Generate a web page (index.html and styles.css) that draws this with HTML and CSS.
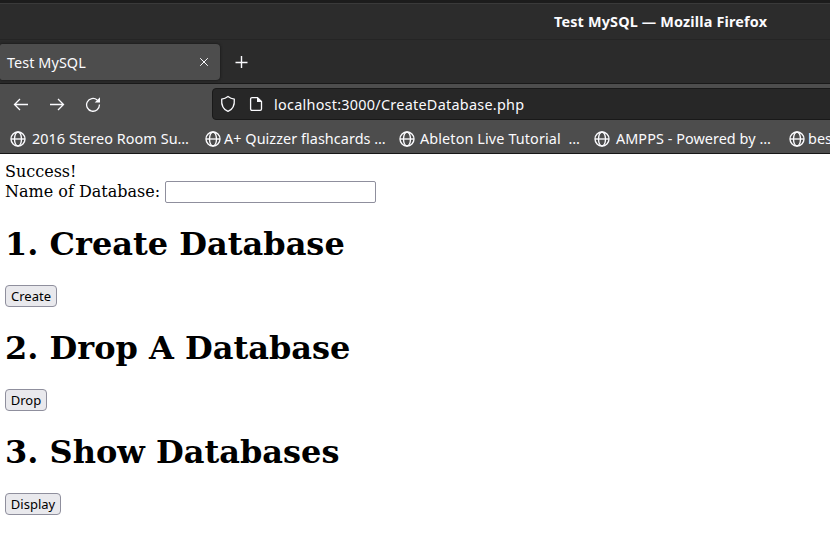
FILE: index.html
```html
<!DOCTYPE html>
<html lang="en">
<head>
<meta charset="utf-8">
<title>Test MySQL</title>
<link rel="stylesheet" href="styles.css">
</head>
<body>
<svg class="symbols" aria-hidden="true">
  <symbol id="globe" viewBox="0 0 16 16"><g fill="none" stroke="currentColor" stroke-width="1.35"><circle cx="8" cy="8" r="7"/><ellipse cx="8" cy="8" rx="3.5" ry="7"/><path d="M1 8h14"/></g></symbol>
</svg>
<header class="titlebar"><span class="window-title">Test MySQL — Mozilla Firefox</span></header>
<div class="tabs">
  <div class="tab"><span class="tab-name">Test MySQL</span>
    <svg class="close" width="10" height="10" viewBox="0 0 10 10"><path d="M1.2 1.2l7.6 7.6M8.8 1.2L1.2 8.8"/></svg>
  </div>
  <svg class="plus" width="14" height="14" viewBox="0 0 14 14"><path d="M7.5 1v12M1.5 7.5h12"/></svg>
</div>
<nav class="toolbar">
  <svg class="nav-icon" width="16" height="16" viewBox="0 0 16 16"><path d="M15 8.5H1.5M7 3L1.5 8.5L7 14"/></svg>
  <svg class="nav-icon" width="16" height="16" viewBox="0 0 16 16"><path d="M1 8.5h13.5M9 3l5.5 5.5L9 14"/></svg>
  <svg class="nav-icon" width="16" height="16" viewBox="0 0 16 16"><path d="M14.4 8.5A6.4 6.4 0 1 1 12.2 4"/><path class="solid" d="M15 1.2v5.3H9.7z"/></svg>
  <div class="address">
    <svg width="16" height="18" viewBox="0 0 16 18"><path d="M8 1.5C6 3.1 3.8 3.9 1.7 4.2C1.2 10.2 3.5 14.5 8 16.4C12.5 14.5 14.8 10.2 14.3 4.2C12.2 3.9 10 3.1 8 1.5z"/></svg>
    <svg class="page-icon" width="14" height="16" viewBox="0 0 14 16"><path d="M3 1.6h5.5l4 4V13a1.4 1.4 0 0 1-1.4 1.4H3A1.4 1.4 0 0 1 1.6 13V3A1.4 1.4 0 0 1 3 1.6z"/><path class="solid" d="M8 1.3V6h4.8z"/></svg>
    <span class="url">localhost:3000/CreateDatabase.php</span>
  </div>
</nav>
<div class="bookmarks">
  <div class="bookmark stereo"><svg><use href="#globe"/></svg><span>2016 Stereo Room Su…</span></div>
  <div class="bookmark quizzer"><svg><use href="#globe"/></svg><span>A+ Quizzer flashcards …</span></div>
  <div class="bookmark ableton"><svg><use href="#globe"/></svg><span>Ableton Live Tutorial &nbsp;…</span></div>
  <div class="bookmark ampps"><svg><use href="#globe"/></svg><span>AMPPS - Powered by …</span></div>
  <div class="bookmark best"><svg><use href="#globe"/></svg><span>bes</span></div>
</div>
<main>
  <div class="status">Success!</div>
  <div class="field"><label for="name">Name of Database:</label><input id="name" type="text"></div>
  <h1>1. Create Database</h1>
  <button class="create">Create</button>
  <h1>2. Drop A Database</h1>
  <button class="drop">Drop</button>
  <h1>3. Show Databases</h1>
  <button class="display">Display</button>
</main>
</body>
</html>
```
FILE: styles.css
```css
* { box-sizing: border-box; }
body { margin: 0; width: 830px; height: 542px; overflow: hidden; background: #fff; color: #000; font: 16px/20px "DejaVu Serif", serif; }
svg { display: block; flex: none; fill: none; stroke: #fbfbfe; stroke-width: 1.3; }
.symbols { position: absolute; width: 0; height: 0; }
.solid { fill: #fbfbfe; stroke: none; }
.titlebar, .tabs, .toolbar, .bookmarks { display: flex; color: #fbfbfe; font: 14.4px/20px "Noto Sans", sans-serif; white-space: nowrap; }
.titlebar { height: 40px; padding: 9px 0 0 554px; background: #2c2c2c; border-top: 3px solid #1c1c1c; border-bottom: 1px solid #252525; box-shadow: inset 0 1px #3a3a3a; font-weight: 700; font-size: 14.4px; }
.window-title { letter-spacing: .17px; }
.tabs { height: 44px; padding-top: 4px; background: #2b2b2b; border-bottom: 1px solid #191919; }
.tab { display: flex; align-items: center; width: 220px; height: 36px; padding: 1px 11px 0 7px; background: #4d4d4d; border-radius: 2px 4px 4px 2px; box-shadow: 0 0 3px #111; }
.tab-name { letter-spacing: .08px; }
.close { margin: -2px 0 0 auto; stroke-width: 1; }
.plus { margin: 11px 0 0 14px; stroke-width: 1.4; }
.toolbar { height: 38px; padding: 4px 0 0 13px; gap: 20px; background: #4d4d4d; }
.nav-icon { margin-top: 8px; }
.address { display: flex; align-items: center; width: 640px; height: 32px; flex: none; margin-left: 91px; padding-left: 7px; background: #272727; border: 1px solid #191919; border-radius: 4px; }
.page-icon { margin-left: 13px; }
.url { margin: 1px 0 0 11px; letter-spacing: .27px; }
.bookmarks { height: 32px; padding: 7px 0 0 9px; background: #4d4d4d; border-bottom: 1px solid #161616; letter-spacing: .06px; }
.bookmark { display: flex; flex: none; }
.bookmark svg { width: 17px; height: 16px; margin: 2px 6px 0 0; padding-left: 1px; color: #fbfbfe; stroke: none; }
.stereo { width: 195px; }
.quizzer { width: 194px; }
.ableton { width: 195px; }
.ampps { width: 195px; }
.quizzer svg, .best svg { margin-right: 3px; }
.ableton svg { margin-right: 5px; }
.ableton span { letter-spacing: .12px; }
main { padding: 8px 5px; }
.field { display: flex; height: 21px; }
input { width: 211px; height: 22px; margin: -1px 0 0 5px; padding: 1px 2px; border: 1px solid #8f8f9d; border-radius: 2px; background: #fff; }
h1 { margin: 22px 0; font-size: 32px; line-height: 38px; }
button { display: block; height: 22px; padding: 0; border: 1px solid #8f8f9d; border-radius: 4px; background: #e9e9ed; color: #000; font: 13px/18px "Noto Sans", sans-serif; }
.create { width: 52px; }
.drop { width: 42px; }
.display { width: 56px; }
```
